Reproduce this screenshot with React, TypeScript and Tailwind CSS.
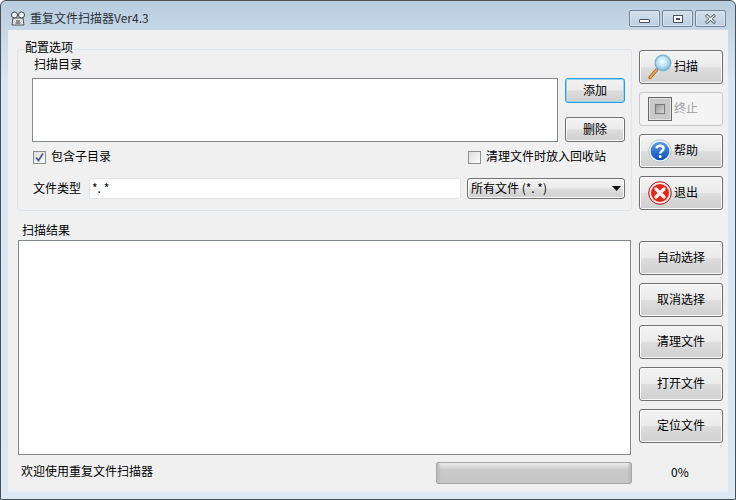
const font = 'font-["Noto_Sans_CJK_SC","Liberation_Sans",sans-serif]';

const faceFill = 'bg-[linear-gradient(#f3f3f3_0%,#ebebeb_48%,#dddddd_52%,#cfcfcf_100%)] rounded-[3px]';
const btnFace = `${faceFill} border border-[#707070] shadow-[inset_0_0_0_1px_#fbfbfb]`;
const capBtn =
  'w-[31px] h-[17px] rounded-[2px] border border-[#71859b] bg-[linear-gradient(#d3dfeb,#bccfe1)] shadow-[inset_0_0_0_1px_#d9e4ef] flex items-center justify-center';

const SearchIcon = () => (
  <svg width="24" height="28" viewBox="0 0 24 28">
    <defs>
      <radialGradient id="lens" cx="0.45" cy="0.4" r="0.6">
        <stop offset="0" stopColor="#f4fbff" />
        <stop offset="0.6" stopColor="#b5def3" />
        <stop offset="1" stopColor="#6fb4d8" />
      </radialGradient>
    </defs>
    <path d="M8.5 17 L2 24.5" stroke="#a8641c" strokeWidth="3.4" strokeLinecap="round" />
    <path d="M8.5 17 L2 24.5" stroke="#f0b050" strokeWidth="1.6" strokeLinecap="round" />
    <circle cx="15" cy="10" r="7.8" fill="url(#lens)" stroke="#7fb5d0" strokeWidth="1.4" />
  </svg>
);

const StopIcon = () => (
  <div className="w-6 h-6 border border-[#666666] bg-[#c9c9c9] flex items-center justify-center shadow-[inset_0_0_0_1px_#e4e4e4]">
    <div className="w-2.5 h-2.5 border border-[#777777] bg-[linear-gradient(135deg,#9a9a9a,#d8d8d8)]" />
  </div>
);

const HelpIcon = () => (
  <svg width="24" height="24" viewBox="0 0 24 24">
    <defs>
      <linearGradient id="helpBlue" x1="0" y1="0" x2="0" y2="1">
        <stop offset="0" stopColor="#5a9be8" />
        <stop offset="1" stopColor="#0e4fb5" />
      </linearGradient>
    </defs>
    <circle cx="12" cy="12" r="11.2" fill="#f4f8fd" stroke="#9db9d8" strokeWidth="0.8" />
    <circle cx="12" cy="12" r="9.3" fill="url(#helpBlue)" />
    <path d="M8.6 9.4 C8.8 5.9 15.6 5.9 15.6 9.6 C15.6 12.2 12.2 12 12.2 14.6" fill="none" stroke="#fff" strokeWidth="2.4" />
    <circle cx="12.2" cy="17.6" r="1.5" fill="#fff" />
  </svg>
);

const ExitIcon = () => (
  <svg width="24" height="24" viewBox="0 0 24 24">
    <circle cx="12" cy="12" r="11.3" fill="#f6e8e8" stroke="#a80f0f" strokeWidth="1" />
    <circle cx="12" cy="12" r="9" fill="#dd2a1c" />
    <path d="M8 8 L16 16 M16 8 L8 16" stroke="#fbeeee" strokeWidth="3.2" strokeLinecap="round" />
  </svg>
);

const AppIcon = () => (
  <svg width="16" height="16" viewBox="0 0 16 16">
    <path d="M3 8 H13 L14 15 H2 Z" fill="#e4e4e4" stroke="#555555" />
    <circle cx="4.5" cy="5" r="3" fill="#f2f8fc" stroke="#3c3c3c" />
    <circle cx="11.5" cy="5" r="3" fill="#f2f8fc" stroke="#3c3c3c" />
    <path d="M6 11 L10 11 M5.5 13 L10.5 13" stroke="#333333" />
  </svg>
);

const Btn = ({ label }: { label: string }) => (
  <button className={`${btnFace} w-[84px] h-[34px] pb-[2px] flex items-center justify-center text-[12px] text-black`}>
    {label}
  </button>
);

const IconBtn = ({ icon, label, muted }: { icon: React.ReactNode; label: string; muted?: boolean }) => (
  <button
    className={
      muted
        ? 'w-[84px] h-[34px] flex items-center gap-[2px] pl-[8px] text-[12px] text-[#a0a0a0] bg-[#f4f4f4] border border-[#c8c8c8] rounded-[3px]'
        : `${btnFace} w-[84px] h-[34px] flex items-center gap-[2px] pl-[8px] text-[12px] text-black`
    }
  >
    {icon}
    <span className="pb-[2px]">{label}</span>
  </button>
);

const SmallBtn = ({ label, focused }: { label: string; focused?: boolean }) => (
  <button
    className={`${faceFill} w-[60px] h-[25px] pb-[2px] border text-[12px] text-black ${
      focused
        ? 'border-[#2f9bd8] shadow-[inset_0_0_0_1px_#8fd8f5]'
        : 'border-[#707070] shadow-[inset_0_0_0_1px_#fbfbfb]'
    }`}
  >
    {label}
  </button>
);

const Check = ({ checked, label }: { checked?: boolean; label: string }) => (
  <label className="flex items-center gap-[5px] text-[12px] text-black h-[14px]">
    <span className="w-[13px] h-[13px] border border-[#8e8f8f] bg-[linear-gradient(135deg,#dedede,#fbfbfb)] flex items-center justify-center">
      {checked && (
        <svg width="11" height="11" viewBox="0 0 11 11">
          <path d="M2 5.5 L4.5 8.5 L9 1.5" fill="none" stroke="#4a5f97" strokeWidth="1.8" />
        </svg>
      )}
    </span>
    <span className="pb-[2px]">{label}</span>
  </label>
);

export default function App() {
  return (
    <div className={`${font} w-[736px] h-[500px] overflow-hidden flex flex-col border border-[#4a4f55] rounded-t-[6px] bg-[linear-gradient(#b9cde0_0px,#c6d7e7_30px,#d9e6f3_80px,#dce8f4_100%)] text-[12px] leading-none text-black`}>
      {/* title bar */}
      <div className="h-[29px] shrink-0 flex pl-[9px] pr-[9px]">
        <div className="flex items-center pt-[5px]">
          <AppIcon />
          <span className="ml-1 text-[#2b3138]">重复文件扫描器Ver4.3</span>
        </div>
        <div className="ml-auto flex gap-[2px] pt-[9px]">
          <div className={capBtn}>
            <div className="w-[11px] h-[4px] border border-[#48525e] bg-white rounded-[1px] mt-[5px]" />
          </div>
          <div className={capBtn}>
            <div className="w-[10px] h-[8px] border border-[#48525e] bg-white flex items-center justify-center">
              <div className="w-[4px] h-[2px] bg-[#48525e]" />
            </div>
          </div>
          <div className={capBtn}>
            <svg width="13" height="10" viewBox="0 0 13 10">
              <path d="M2 1 L11 9 M11 1 L2 9" stroke="#4f5a66" strokeWidth="3" />
              <path d="M2.5 1.5 L10.5 8.5 M10.5 1.5 L2.5 8.5" stroke="#ffffff" strokeWidth="1.2" />
            </svg>
          </div>
        </div>
      </div>

      {/* client area */}
      <div className="flex-1 mx-[7px] mb-[7px] bg-[#f0f0f0] pl-[9px] pr-[5px] pt-[19px] flex flex-col">
        {/* top row */}
        <div className="flex gap-[7px] h-[162px]">
          <div className="relative w-[615px] h-[162px] border border-[#dce3ea] rounded-[3px] pl-[14px] pr-[6px]">
            <span className="absolute left-[6px] -top-[9px] bg-[#f0f0f0] px-px">配置选项</span>
            <div className="pl-[2px] pt-[4px] h-[24px] flex items-center">扫描目录</div>
            <div className="flex gap-[7px] mt-[4px]">
              <div className="w-[527px] h-[64px] bg-white border border-[#828790]" />
              <div className="flex flex-col justify-between">
                <SmallBtn label="添加" focused />
                <SmallBtn label="删除" />
              </div>
            </div>
            <div className="flex items-center mt-[8px] pl-px">
              <div className="w-[435px]">
                <Check checked label="包含子目录" />
              </div>
              <Check label="清理文件时放入回收站" />
            </div>
            <div className="flex items-center mt-[14px]">
              <span className="w-[57px] pl-px pb-[2px]">文件类型</span>
              <div className="w-[372px] h-[21px] bg-white border border-[#e2e6ea] rounded-[2px] flex items-center pl-[2px] pb-[2px]">*. *</div>
              <div className={`${btnFace} ml-[6px] w-[158px] h-[21px] flex items-center justify-between pl-[3px] pr-[3px]`}>
                <span className="pb-[2px]">所有文件 (*. *)</span>
                <svg width="9" height="5" viewBox="0 0 9 5">
                  <path d="M0 0 H9 L4.5 5 Z" fill="#111111" />
                </svg>
              </div>
            </div>
          </div>
          <div className="flex flex-col gap-[8px] pt-px">
            <IconBtn icon={<SearchIcon />} label="扫描" />
            <IconBtn icon={<StopIcon />} label="终止" muted />
            <IconBtn icon={<HelpIcon />} label="帮助" />
            <IconBtn icon={<ExitIcon />} label="退出" />
          </div>
        </div>

        {/* results row */}
        <div className="flex mt-[11px]">
          <div className="w-[613px] ml-px">
            <div className="h-[18px] pl-[4px] pb-[3px] flex items-center">扫描结果</div>
            <div className="h-[215px] bg-white border border-[#828790]" />
          </div>
          <div className="ml-[8px] pt-[19px] flex flex-col gap-[8px]">
            <Btn label="自动选择" />
            <Btn label="取消选择" />
            <Btn label="清理文件" />
            <Btn label="打开文件" />
            <Btn label="定位文件" />
          </div>
        </div>

        {/* status row */}
        <div className="flex items-center h-[28px] mt-[4px]">
          <span className="w-[419px] pl-[4px] pb-[4px]">欢迎使用重复文件扫描器</span>
          <div className="w-[196px] h-[22px] rounded-[2px] border border-[#a8a8a8] bg-[linear-gradient(90deg,#b8b8b8,#c8c8c800_2%,#c8c8c800_98%,#b8b8b8),linear-gradient(#eaeaea_0%,#dadada_20%,#c9c9c9_35%,#c6c6c6_100%)]" />
          <span className="ml-[39px] pb-[3px]">0%</span>
        </div>
      </div>
    </div>
  );
}
